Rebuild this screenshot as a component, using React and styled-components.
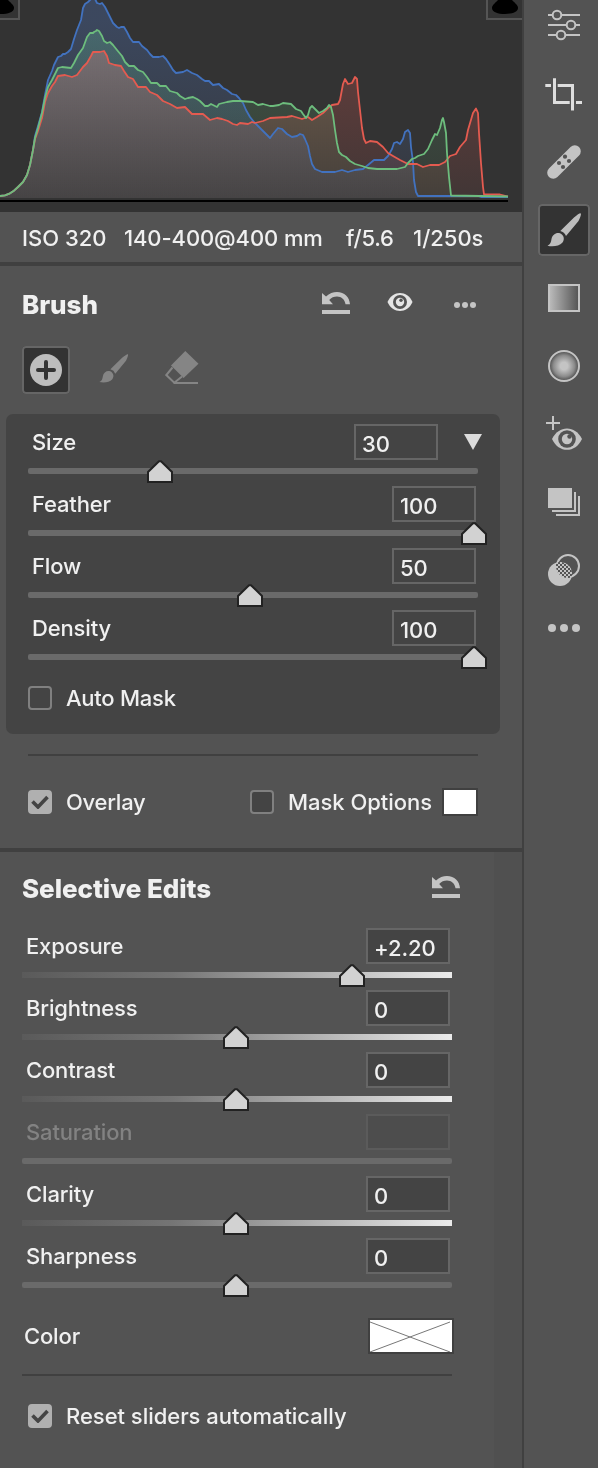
import { useState } from "react";
import styled, { createGlobalStyle, css } from "styled-components";

const GlobalStyle = createGlobalStyle`
	* {
		box-sizing: border-box;
	}
	body {
		margin: 0;
		background: #535353;
		color: #f0f0f0;
		font-family: Inter, "Liberation Sans", sans-serif;
		font-size: 22px;
		font-weight: 500;
		overflow: hidden;
	}
`;

const exifList = [
	{ text: "ISO 320", width: 102, spacing: 0 },
	{ text: "140-400@400 mm", width: 222, spacing: -0.1 },
	{ text: "f/5.6", width: 67, spacing: -0.25 },
	{ text: "1/250s", width: 80, spacing: 0 },
];

const brushSliders = [
	{ label: "Size", value: "30", pos: 29.33, arrow: true },
	{ label: "Feather", value: "100", pos: 99.11 },
	{ label: "Flow", value: "50", pos: 49.33 },
	{ label: "Density", value: "100", pos: 99.11 },
];

const editSliders = [
	{ label: "Exposure", value: "+2.20", pos: 76.74, gradient: true },
	{ label: "Brightness", value: "0", pos: 49.77, gradient: true },
	{ label: "Contrast", value: "0", pos: 49.77, gradient: true },
	{ label: "Saturation", value: "", disabled: true },
	{ label: "Clarity", value: "0", pos: 49.77, gradient: true },
	{ label: "Sharpness", value: "0", pos: 49.77 },
];

// histogram curves
const SHADOWS = "0,196 5,195.3 10,193.3 14,190.7 18,187 23,182 27,175 30,165 33,150";
const BLUE = `${SHADOWS} 35,136 38,126 42,112 45,95 48,80 52,71 54,65 58,57 61,56 63,54 65,54 68,52 71,49 74,39 77,30 81,20 83,8 85,4 88,2 91,-1 95,-1 97,3 100,4 102,3 105,7 107,11 110,17 113,23 117,27 119,28 121,27 124,27 127,32 130,38 133,42 139,42 142,46 147,50 150,54 153,57 159,57 163,56 166,59 170,65 173,70 176,73 183,72 187,70 192,73 197,75 202,79 205,81 209,81 213,85 219,84 223,88 227,90 232,94 236,95 239,98 243,103 246,110 250,117 254,122 258,126 263,131 270,138 273,134 278,128 282,129 287,134 292,137 297,136 300,134 303,135 305,139 308,146 310,156 312,164 315,169 322,172 335,172 342,170 348,172 355,170 363,169 368,165 374,160 384,160 388,156 392,149 394,143 397,142 400,144 403,139 405,132 408,130 410,133 411,147 413,162 414,180 416,192 418,196 478,196 481,197 508,197`;
const GREEN = `${SHADOWS} 35,138 38,128 42,113 45,98 48,87 52,80 55,74 58,68 62,67 71,68 74,63 78,55 83,48 87,37 90,33 93,33 94,32 96,31 97,30 99,31 102,36 104,41 107,43 110,42 113,45 117,50 122,56 125,62 129,66 134,66 138,70 143,72 147,77 151,83 157,83 160,86 166,86 170,91 177,93 180,96 185,99 188,98 193,97 197,99 200,101 205,106 208,106 211,104 217,107 219,104 227,102 233,101 240,101 253,102 258,105 263,104 270,106 273,106 279,105 283,103 291,104 296,109 301,111 303,114 306,118 308,115 310,108 312,106 315,109 319,113 323,111 327,108 329,105 331,107 333,115 335,130 337,143 339,152 342,155 346,157 350,161 355,164 362,166 368,168 377,169 397,169 405,167 408,163 412,159 415,158 418,156 424,154 428,149 432,140 435,134 437,135 440,128 442,120 443,118 444,122 446,133 447,153 449,177 451,195.5 508,196.5`;
const RED = `${SHADOWS} 35,139 38,131 42,118 45,102 48,93 52,86 55,82 58,76 65,75 72,77 77,75 83,67 87,63 91,56 93,52 100,52 104,51 107,56 109,63 115,65 121,66 124,71 128,77 133,79 138,87 146,87 150,92 157,95 163,101 170,104 177,108 185,107 192,114 203,114 210,120 217,118 222,119 228,121 233,124 237,125 240,123 248,124 252,122 255,123 263,121 270,118 287,117 292,116 302,119 308,117 312,120 317,117 323,113 328,108 332,105 338,104 340,100 343,84 345,79 348,84 352,83 355,77 357,79 358,92 360,110 362,128 364,139 366,143 370,141 377,142 383,147 388,153 393,156 400,160 408,164 417,164 423,167 430,165 439,165 445,162 450,156 456,154 460,147 466,140 468,130 473,113 476,108.5 478,113 479,133 481,163 483,187 484,194.5 500,194.5 508,196.5`;

const channels = [
	{ id: "blue", points: BLUE, line: "#4272bf", fill: "#204a9a" },
	{ id: "green", points: GREEN, line: "#6dbd7d", fill: "#2c7c40" },
	{ id: "red", points: RED, line: "#e45b50", fill: "#c82c26" },
];

const Histogram = () => (
	<svg width="522" height="212" viewBox="0 0 522 212">
		<defs>
			{channels.map(({ id, fill }) => (
				<linearGradient key={id} id={id} gradientUnits="userSpaceOnUse" x1="0" y1="20" x2="0" y2="198">
					<stop offset="0" stopColor={fill} stopOpacity="0.28" />
					<stop offset="1" stopColor={fill} stopOpacity="0.07" />
				</linearGradient>
			))}
		</defs>
		<rect width="522" height="212" fill="#333" />
		{channels.map(({ id, points }) => (
			<HistogramFill key={id} points={`${points} 508,198 0,198`} fill={`url(#${id})`} />
		))}
		{[channels[0], channels[2], channels[1]].map(({ id, points, line }) => (
			<polyline key={id} points={points} fill="none" stroke={line} strokeWidth="1.8" strokeLinejoin="round" />
		))}
		<path d="M0 201H508" stroke="#000" strokeWidth="2" />
	</svg>
);

const ClipIcon = () => (
	<svg width="26" height="14" viewBox="0 0 26 14">
		<path d="M6 0C2 4 0 5.500 0 8C0 12 6 14 13 14S26 12 26 8C26 5.500 24 4 20 0Z" fill="#000" />
	</svg>
);

const UndoIcon = () => (
	<svg width="28" height="22" viewBox="0 0 28 22" fill="#c4c4c4">
		<path d="M0 1L4 4.500C7.500 1.200 11 0 15 0C22.500 0 27.500 5 28 12.300H23.500C23 7.500 19.500 4.400 15 4.400C12 4.400 9.300 5.500 7.200 8L11 12.300H0Z" />
		<path d="M0 18H28V22H0Z" />
	</svg>
);

const EyeIcon = () => (
	<svg width="26" height="18" viewBox="0 0 26 18">
		<path d="M0.500 9C3 3 8 0 13 0S23 3 25.500 9C23 15 18 18 13 18S3 15 0.500 9Z" fill="#e4e4e4" />
		<circle cx="13" cy="9" r="7" fill="#535353" />
		<circle cx="13" cy="9" r="4.200" fill="#e4e4e4" />
		<circle cx="14" cy="7.200" r="1.700" fill="#535353" />
	</svg>
);

const MoreIcon = () => (
	<svg width="22" height="6" viewBox="0 0 22 6" fill="#c4c4c4">
		<circle cx="3" cy="3" r="3" />
		<circle cx="11" cy="3" r="3" />
		<circle cx="19" cy="3" r="3" />
	</svg>
);

const BrushShape = () => (
	<>
		<path d="M9.500 41.800C12.500 40.500 13 38 13.500 35C14.300 30.500 18.500 28 22 29.300C25.800 30.800 27.200 35.500 24.300 38.800C21.500 42.200 14.500 43 9.500 41.800Z" />
		<path d="M22.300 27L36 13.500Q41.800 8.500 42.800 9.400Q43.600 10.500 40.500 17L28 32Q26.500 28.200 22.300 27Z" />
	</>
);

const AddIcon = () => (
	<svg width="32" height="32" viewBox="0 0 32 32">
		<circle cx="16" cy="16" r="16" fill="#bdbdbd" />
		<path d="M8 16H24M16 8V24" stroke="#333" strokeWidth="4" strokeLinecap="round" />
	</svg>
);

const EraserIcon = () => (
	<svg width="34" height="34" viewBox="0 0 34 34">
		<path d="M20.300 0L33.500 12.700L18.600 27L6 14.500Z" fill="#858585" />
		<path d="M7.500 16.500L1.300 24L9.300 31.700L17 25.500M8.500 32H33" fill="none" stroke="#858585" strokeWidth="2" />
	</svg>
);

const Thumb = () => (
	<svg width="26" height="23" viewBox="0 0 26 23">
		<path d="M1 12L12 1.200H14L25 12V22H1Z" fill="#d2d2d2" stroke="#222" strokeWidth="2" />
	</svg>
);

const Check = () => (
	<svg width="18" height="14" viewBox="0 0 18 14">
		<path d="M1.500 6.500L7 12L16.500 2" fill="none" stroke="#444" strokeWidth="3.600" />
	</svg>
);

const tools = [
	{
		name: "edit",
		icon: (
			<g fill="#535353" stroke="#c4c4c4" strokeWidth="2">
				<path d="M10 15H42M10 25H42M10 35H42" />
				<circle cx="19" cy="15" r="4.300" />
				<circle cx="33" cy="25" r="4.300" />
				<circle cx="23" cy="35" r="4.300" />
			</g>
		),
	},
	{
		name: "crop",
		icon: (
			<path
				d="M7.300 17.500H13M16.500 10.300V34.500H31.700M19.700 17.500H34.500V42.500M38 34.500H44"
				fill="none"
				stroke="#dedede"
				strokeWidth="3"
			/>
		),
	},
	{
		name: "heal",
		icon: (
			<>
				<path d="M15.200 36.800L36.800 15.200" stroke="#c4c4c4" strokeWidth="12" strokeLinecap="round" />
				<g fill="#535353">
					<circle cx="27" cy="20.700" r="2.100" />
					<circle cx="21" cy="27" r="2.100" />
					<circle cx="31" cy="25" r="2.100" />
					<circle cx="25" cy="31" r="2.100" />
				</g>
			</>
		),
	},
	{
		name: "brush",
		icon: (
			<g fill="#bdbdbd">
				<BrushShape />
			</g>
		),
	},
	{
		name: "linear",
		icon: (
			<>
				<linearGradient id="linear">
					<stop offset="0" stopColor="#bdbdbd" />
					<stop offset="1" stopColor="#535353" />
				</linearGradient>
				<rect x="11" y="13" width="30" height="26" fill="url(#linear)" stroke="#c4c4c4" strokeWidth="2" />
			</>
		),
	},
	{
		name: "radial",
		icon: (
			<>
				<radialGradient id="radial">
					<stop offset="0.250" stopColor="#c4c4c4" />
					<stop offset="0.700" stopColor="#8c8c8c" />
					<stop offset="0.950" stopColor="#555" />
				</radialGradient>
				<circle cx="26" cy="26" r="15" fill="url(#radial)" stroke="#c4c4c4" strokeWidth="2" />
			</>
		),
	},
	{
		name: "redeye",
		icon: (
			<>
				<path d="M8 15H22M15 8V22" stroke="#c4c4c4" strokeWidth="2" />
				<path d="M14 31C17.500 24 23 20.500 29 20.500S40.500 24 44 31C40.500 38.500 35 41.800 29 41.800S17.500 38.500 14 31Z" fill="#c4c4c4" />
				<circle cx="29" cy="31" r="8.800" fill="#535353" />
				<circle cx="29" cy="31" r="5.200" fill="#c4c4c4" />
				<circle cx="31.500" cy="28.500" r="2.200" fill="#535353" />
			</>
		),
	},
	{
		name: "snapshots",
		icon: (
			<>
				<path d="M10 12H34V32H10Z" fill="#c4c4c4" />
				<path d="M14 35H37V16M18 39H41V20" fill="none" stroke="#c4c4c4" strokeWidth="2" />
			</>
		),
	},
	{
		name: "presets",
		icon: (
			<>
				<pattern id="checker" width="4" height="4" patternUnits="userSpaceOnUse">
					<path d="M0 0H4V4H0Z" fill="#535353" />
					<path d="M0 0H2V2H0ZM2 2H4V4H2Z" fill="#c4c4c4" />
				</pattern>
				<clipPath id="overlap">
					<circle cx="30" cy="22" r="12" />
				</clipPath>
				<circle cx="30" cy="22" r="11" fill="none" stroke="#c4c4c4" strokeWidth="2" />
				<circle cx="22" cy="30" r="12" fill="#c4c4c4" />
				<circle cx="22" cy="30" r="12" fill="url(#checker)" clipPath="url(#overlap)" />
			</>
		),
	},
	{
		name: "more",
		icon: (
			<g fill="#c4c4c4">
				<circle cx="14" cy="26" r="4" />
				<circle cx="26" cy="26" r="4" />
				<circle cx="38" cy="26" r="4" />
			</g>
		),
	},
];

const SliderRow = ({ label, value, pos, arrow, gradient, disabled }) => (
	<SliderItem>
		<SliderHead>
			<Label $disabled={disabled}>{label}</Label>
			<ValueBox $disabled={disabled}>{value}</ValueBox>
			{arrow && (
				<Arrow width="18" height="16" viewBox="0 0 18 16">
					<path d="M0 0H18L9 16Z" fill="#dcdcdc" />
				</Arrow>
			)}
		</SliderHead>
		<Track $gradient={gradient}>
			{!disabled && (
				<ThumbBox style={{ left: `${pos}%` }}>
					<Thumb />
				</ThumbBox>
			)}
		</Track>
	</SliderItem>
);

const CheckItem = ({ label, tight, defaultChecked = false }) => {
	const [checked, setChecked] = useState(defaultChecked);
	return (
		<CheckRow $tight={tight} onClick={() => setChecked(!checked)}>
			<CheckBox $checked={checked}>{checked && <Check />}</CheckBox>
			{label}
		</CheckRow>
	);
};

const App = () => {
	return (
		<Container>
			<GlobalStyle />
			<Main>
				<HistogramBox>
					<Histogram />
					<ClipBox $left>
						<ClipIcon />
					</ClipBox>
					<ClipBox>
						<ClipIcon />
					</ClipBox>
				</HistogramBox>
				<ExifBar>
					{exifList.map(exif => (
						<ExifText key={exif.text} $width={exif.width} $spacing={exif.spacing}>
							{exif.text}
						</ExifText>
					))}
				</ExifBar>
				<BrushSection>
					<TitleRow $height={72}>
						<Title>Brush</Title>
						<HeaderIcons>
							<UndoIcon />
							<EyeBox>
								<EyeIcon />
							</EyeBox>
							<MoreBox>
								<MoreIcon />
							</MoreBox>
						</HeaderIcons>
					</TitleRow>
					<ModeRow>
						<ModeButton $active>
							<AddIcon />
						</ModeButton>
						<ModeButton>
							<svg width="30" height="31" viewBox="9 8 35 36" fill="#858585">
								<BrushShape />
							</svg>
						</ModeButton>
						<ModeButton>
							<EraserIcon />
						</ModeButton>
					</ModeRow>
					<BrushPanel>
						{brushSliders.map(slider => (
							<SliderRow key={slider.label} {...slider} />
						))}
						<AutoMask>
							<CheckItem label="Auto Mask" tight />
						</AutoMask>
					</BrushPanel>
					<OverlayRow>
						<CheckItem label="Overlay" tight defaultChecked />
						<MaskOptions>
							<CheckItem label="Mask Options" />
							<MaskColor />
						</MaskOptions>
					</OverlayRow>
				</BrushSection>
				<EditSection>
					<EditBody>
						<TitleRow $height={68}>
							<Title>Selective Edits</Title>
							<UndoIcon />
						</TitleRow>
						<EditSliders>
							{editSliders.map(slider => (
								<SliderRow key={slider.label} {...slider} />
							))}
						</EditSliders>
						<ColorRow>
							Color
							<ColorBox>
								<svg width="82" height="32" viewBox="0 0 82 32">
									<path d="M0 2L80 32M0 32L80 2" stroke="#777" strokeWidth="1" />
								</svg>
							</ColorBox>
						</ColorRow>
						<ResetRow>
							<CheckItem label="Reset sliders automatically" defaultChecked />
						</ResetRow>
					</EditBody>
				</EditSection>
			</Main>
			<ToolBar>
				{tools.map(tool => (
					<ToolCell key={tool.name} $short={tool.name === "more"}>
						<ToolButton $active={tool.name === "brush"}>
							<svg width="52" height="52" viewBox="0 0 52 52">
								{tool.icon}
							</svg>
						</ToolButton>
					</ToolCell>
				))}
			</ToolBar>
		</Container>
	);
};
export default App;

const activeButton = css`
	background: #333;
	box-shadow: inset 0 0 0 2px #666;
`;

const Container = styled.div`
	display: flex;
	width: 598px;
	height: 1468px;
	overflow: hidden;
	svg {
		display: block;
		flex-shrink: 0;
	}
`;

const Main = styled.div`
	width: 524px;
	border-right: 2px solid #404040;
	display: flex;
	flex-direction: column;
`;

const HistogramBox = styled.div`
	position: relative;
	height: 212px;
	background: #333;
`;

const HistogramFill = styled.polygon`
	mix-blend-mode: plus-lighter;
`;

const ClipBox = styled.div`
	position: absolute;
	top: 0;
	${({ $left }) => ($left ? "left: -16px;" : "right: 0;")}
	width: 36px;
	height: 20px;
	padding-left: 4px;
	background: #333;
	border: solid #555;
	border-width: ${({ $left }) => ($left ? "0 2px 2px 0" : "0 0 2px 2px")};
`;

const ExifBar = styled.div`
	display: flex;
	align-items: center;
	height: 54px;
	padding: 2px 0 0 22px;
	border-bottom: 4px solid #404040;
`;

const ExifText = styled.span`
	width: ${({ $width }) => $width}px;
	letter-spacing: ${({ $spacing }) => $spacing}px;
	white-space: nowrap;
`;

const BrushSection = styled.section`
	height: 586px;
	border-bottom: 4px solid #404040;
`;

const TitleRow = styled.div`
	display: flex;
	align-items: center;
	justify-content: space-between;
	height: ${({ $height }) => $height}px;
	padding: 2px 34px 0 22px;
`;

const Title = styled.h2`
	margin: 0;
	padding-top: 3px;
	font-size: 26px;
	font-weight: 800;
	letter-spacing: -0.05px;
`;

const HeaderIcons = styled.div`
	display: flex;
	align-items: center;
	gap: 38px;
	padding-right: 12px;
`;

const EyeBox = styled.div`
	margin: 0 1px 0 -1px;
	padding-bottom: 2px;
`;

const MoreBox = styled.div`
	padding: 4px 0 0 2px;
`;

const ModeRow = styled.div`
	display: flex;
	gap: 20px;
	height: 76px;
	padding: 8px 0 0 22px;
`;

const ModeButton = styled.div`
	display: flex;
	align-items: center;
	justify-content: center;
	width: 48px;
	height: 48px;
	border-radius: 4px;
	${({ $active }) => ($active ? activeButton : "padding-bottom: 4px;")}
`;

const BrushPanel = styled.div`
	width: 494px;
	height: 320px;
	margin-left: 6px;
	padding: 10px 22px 0;
	background: #444;
	border-radius: 7px;
`;

const SliderItem = styled.div`
	height: 62px;
`;

const SliderHead = styled.div`
	display: flex;
	align-items: center;
	height: 36px;
	margin-bottom: 8px;
	padding: 0 2px 0 4px;
`;

const Label = styled.span`
	flex: 1;
	letter-spacing: -0.15px;
	color: ${({ $disabled }) => ($disabled ? "#828282" : "#f0f0f0")};
`;

const ValueBox = styled.div`
	display: flex;
	align-items: center;
	width: 84px;
	height: 36px;
	padding: 4px 0 0 6px;
	letter-spacing: -0.1px;
	background: ${({ $disabled }) => ($disabled ? "#4d4d4d" : "#444")};
	border: 2px solid ${({ $disabled }) => ($disabled ? "#5b5b5b" : "#666")};
`;

const Arrow = styled.svg`
	margin: 0 -6px 0 26px;
`;

const Track = styled.div`
	position: relative;
	height: 6px;
	border-radius: ${({ $gradient }) => ($gradient ? 0 : 2)}px;
	background: ${({ $gradient }) =>
		$gradient ? "linear-gradient(to right, #5a5a5a, #757575 35%, #ebebeb)" : "#6a6a6a"};
`;

const ThumbBox = styled.div`
	position: absolute;
	top: -8px;
	margin-left: -13px;
`;

const AutoMask = styled.div`
	padding-top: 14px;
`;

const CheckRow = styled.div`
	display: flex;
	align-items: center;
	gap: 14px;
	height: 24px;
	letter-spacing: ${({ $tight }) => ($tight ? -0.25 : -0.03)}px;
	white-space: nowrap;
`;

const CheckBox = styled.span`
	display: flex;
	align-items: center;
	justify-content: center;
	width: 24px;
	height: 24px;
	border-radius: 4px;
	background: ${({ $checked }) => ($checked ? "#b0b0b0" : "#444")};
	border: 2px solid ${({ $checked }) => ($checked ? "#b0b0b0" : "#808080")};
`;

const OverlayRow = styled.div`
	display: flex;
	align-items: center;
	justify-content: space-between;
	width: 450px;
	height: 94px;
	margin: 20px 0 0 28px;
	border-top: 2px solid #404040;
`;

const MaskOptions = styled.div`
	display: flex;
	align-items: center;
	justify-content: space-between;
	width: 228px;
`;

const MaskColor = styled.span`
	width: 36px;
	height: 28px;
	background: #fff;
	border: 2px solid #404040;
`;

const EditSection = styled.section`
	flex: 1;
	background: #505050;
`;

const EditBody = styled.div`
	width: 494px;
	height: 100%;
	background: #535353;
`;

const EditSliders = styled.div`
	width: 430px;
	margin: 8px 0 0 22px;
`;

const ColorRow = styled.div`
	display: flex;
	align-items: center;
	justify-content: space-between;
	width: 430px;
	height: 36px;
	margin: 18px 0 20px 24px;
	letter-spacing: -0.15px;
`;

const ColorBox = styled.div`
	width: 86px;
	height: 36px;
	background: #fff;
	border: 2px solid #404040;
`;

const ResetRow = styled.div`
	width: 430px;
	margin-left: 22px;
	padding: 28px 0 0 6px;
	border-top: 2px solid #404040;
`;

const ToolBar = styled.nav`
	width: 74px;
	margin-top: -8px;
	padding-left: 14px;
`;

const ToolCell = styled.div`
	display: flex;
	align-items: center;
	height: ${({ $short }) => ($short ? 48 : 68)}px;
`;

const ToolButton = styled.div`
	width: 52px;
	height: 52px;
	border-radius: 4px;
	${({ $active }) => $active && activeButton}
`;
